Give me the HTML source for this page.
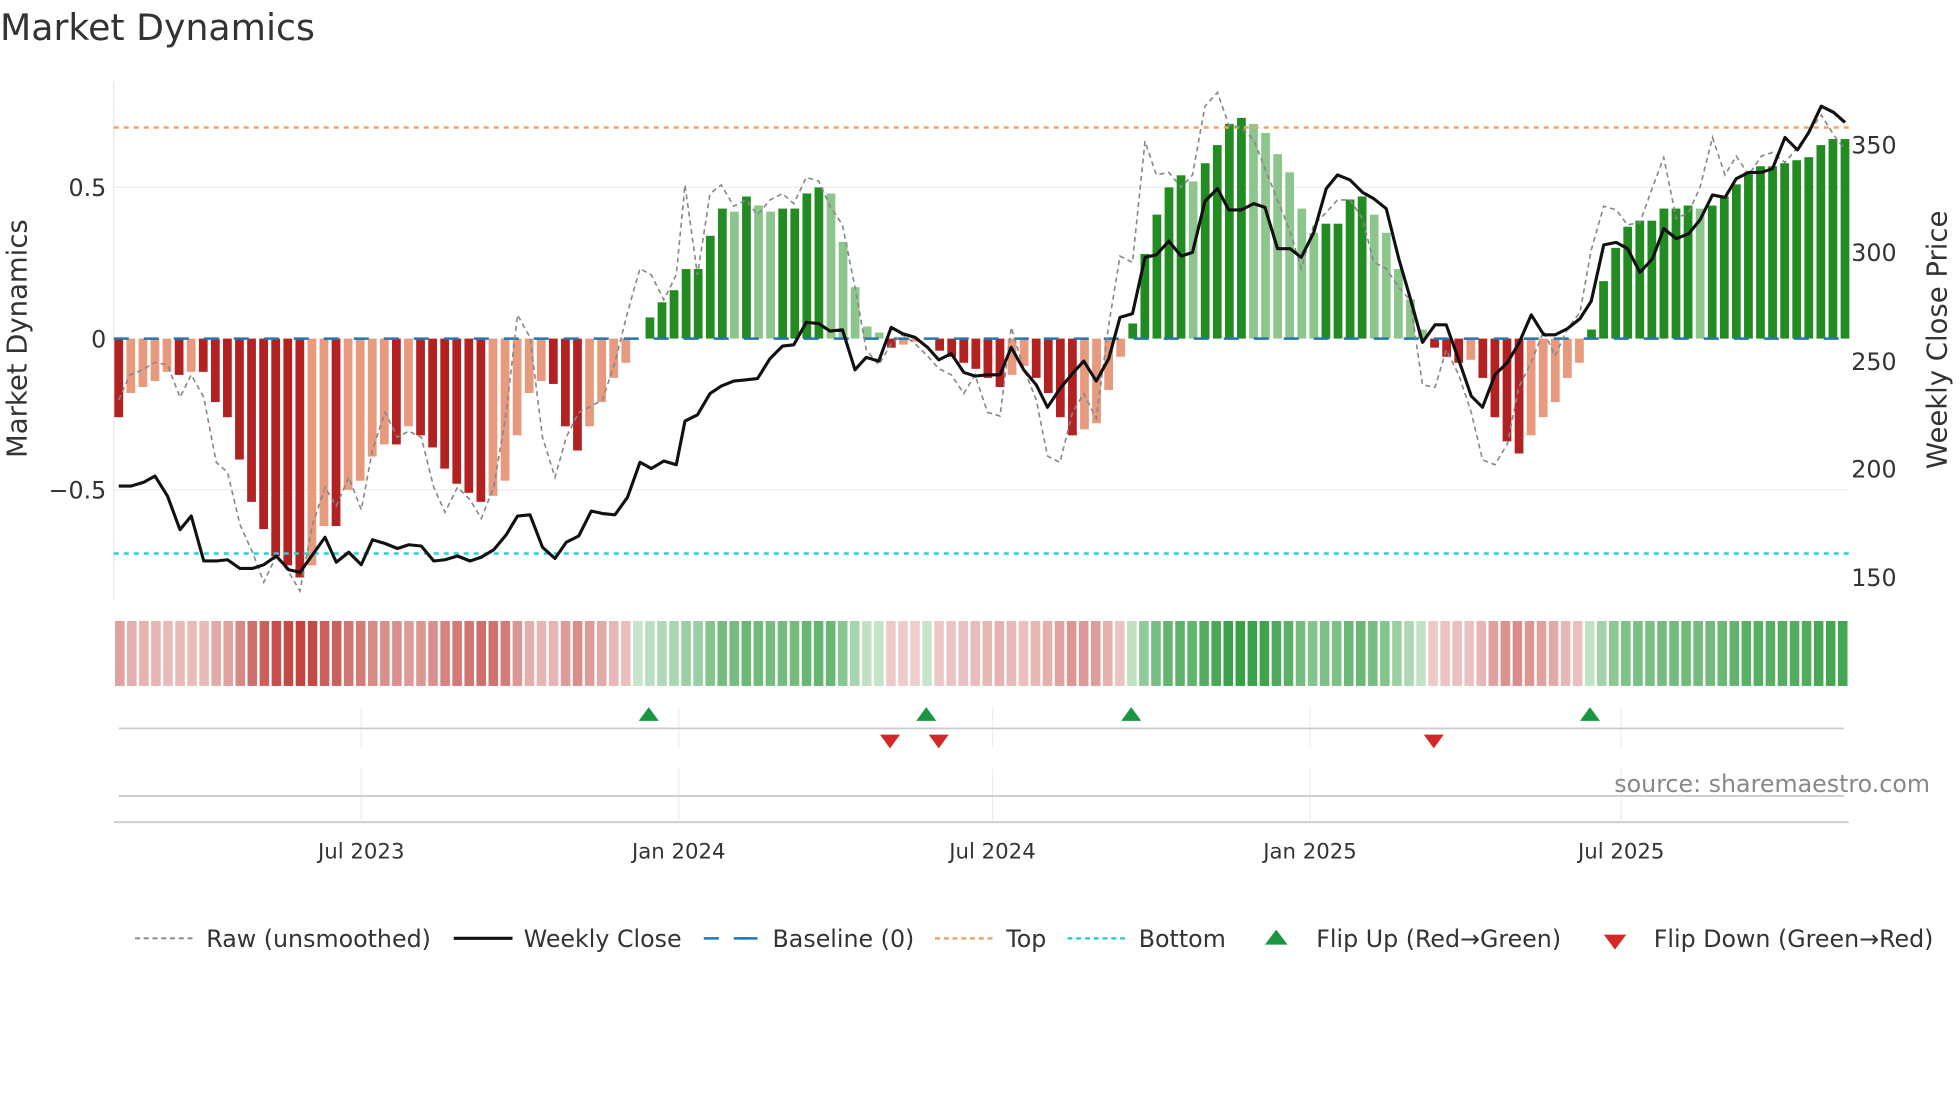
<!DOCTYPE html>
<html><head><meta charset="utf-8"><style>
html,body{margin:0;padding:0;background:#fff;}
svg{display:block;font-family:"DejaVu Sans","Liberation Sans",sans-serif;}
</style></head><body>
<svg id="s" width="1960" height="1102" viewBox="0 0 1568 882" preserveAspectRatio="none" xmlns="http://www.w3.org/2000/svg">
<text x="0" y="32" font-size="29" fill="#333">Market Dynamics</text>
<line x1="91" y1="65" x2="91" y2="480" stroke="#e6e6e6" stroke-width="1"/>
<line x1="91" y1="150" x2="1479" y2="150" stroke="#eee"/>
<line x1="91" y1="392" x2="1479" y2="392" stroke="#eee"/>
<g id="bars"></g>
<line x1="91" y1="271" x2="1479" y2="271" stroke="#1f77b4" stroke-width="2" stroke-dasharray="12,12"/>
<line x1="91" y1="102" x2="1479" y2="102" stroke="#f4a460" stroke-width="2" stroke-dasharray="4,4"/>
<line x1="91" y1="443" x2="1479" y2="443" stroke="#2ad0d8" stroke-width="2" stroke-dasharray="4,4"/>
<polyline id="raw" fill="none" stroke="#888" stroke-width="1.3" stroke-dasharray="4,3"/>
<polyline id="close" fill="none" stroke="#111" stroke-width="2.5" stroke-linejoin="round"/>
<g font-size="19" fill="#333">
<text x="85" y="157" text-anchor="end">0.5</text>
<text x="85" y="278" text-anchor="end">0</text>
<text x="85" y="399" text-anchor="end">−0.5</text>
<text x="1481" y="123">350</text>
<text x="1481" y="209">300</text>
<text x="1481" y="296">250</text>
<text x="1481" y="382">200</text>
<text x="1481" y="469">150</text>
</g>
<text transform="translate(21,271) rotate(-90)" font-size="22" fill="#333" text-anchor="middle">Market Dynamics</text>
<text transform="translate(1557,272) rotate(-90)" font-size="22" fill="#333" text-anchor="middle">Weekly Close Price</text>
<g id="strip"></g>
<g stroke="#eee">
<line x1="289" y1="566" x2="289" y2="598"/><line x1="543" y1="566" x2="543" y2="598"/><line x1="794" y1="566" x2="794" y2="598"/><line x1="1048" y1="566" x2="1048" y2="598"/><line x1="1297" y1="566" x2="1297" y2="598"/>
<line x1="289" y1="615" x2="289" y2="658"/><line x1="543" y1="615" x2="543" y2="658"/><line x1="794" y1="615" x2="794" y2="658"/><line x1="1048" y1="615" x2="1048" y2="658"/><line x1="1297" y1="615" x2="1297" y2="658"/>
</g>
<line x1="95" y1="583" x2="1475" y2="583" stroke="#ccc" stroke-width="1.5"/>
<line x1="95" y1="637" x2="1475" y2="637" stroke="#ccc" stroke-width="1.5"/>
<line x1="91" y1="658" x2="1479" y2="658" stroke="#ccc" stroke-width="1.5"/>
<g fill="#1a9641">
<path d="M519,566 l-8,11 h16z"/><path d="M741,566 l-8,11 h16z"/><path d="M905,566 l-8,11 h16z"/><path d="M1272,566 l-8,11 h16z"/>
</g>
<g fill="#d62728">
<path d="M712,599 l-8,-11 h16z"/><path d="M751,599 l-8,-11 h16z"/><path d="M1147,599 l-8,-11 h16z"/>
</g>
<text x="1544" y="634" font-size="19" fill="#888" text-anchor="end">source: sharemaestro.com</text>
<g font-size="17" fill="#333" text-anchor="middle">
<text x="289" y="687">Jul 2023</text><text x="543" y="687">Jan 2024</text><text x="794" y="687">Jul 2024</text><text x="1048" y="687">Jan 2025</text><text x="1297" y="687">Jul 2025</text>
</g>
<g font-size="19" fill="#333">
<line x1="108" y1="751" x2="154" y2="751" stroke="#888" stroke-width="1.5" stroke-dasharray="4,3"/>
<text x="165" y="758">Raw (unsmoothed)</text>
<line x1="363" y1="751" x2="410" y2="751" stroke="#111" stroke-width="2.5"/>
<text x="419" y="758">Weekly Close</text>
<line x1="562" y1="751" x2="608" y2="751" stroke="#1f77b4" stroke-width="2" stroke-dasharray="12,12" stroke-dashoffset="-1"/>
<line x1="592" y1="751" x2="606" y2="751" stroke="#1f77b4" stroke-width="2"/>
<text x="618" y="758">Baseline (0)</text>
<line x1="748" y1="751" x2="794" y2="751" stroke="#f4a460" stroke-width="2" stroke-dasharray="4,3"/>
<text x="805" y="758">Top</text>
<line x1="854" y1="751" x2="900" y2="751" stroke="#2ad0d8" stroke-width="2" stroke-dasharray="4,3"/>
<text x="911" y="758">Bottom</text>
<path d="M1021,744 l-9,12 h18z" fill="#1a9641"/>
<text x="1053" y="758">Flip Up (Red→Green)</text>
<path d="M1292,760 l-9,-12 h18z" fill="#d62728"/>
<text x="1323" y="758">Flip Down (Green→Red)</text>
</g>
</svg>
<script>
var v=[-0.26,-0.18,-0.16,-0.14,-0.11,-0.12,-0.11,-0.11,-0.21,-0.26,-0.40,-0.54,-0.63,-0.72,-0.75,-0.79,-0.75,-0.62,-0.62,-0.50,-0.47,-0.39,-0.35,-0.35,-0.29,-0.32,-0.36,-0.43,-0.48,-0.51,-0.54,-0.52,-0.47,-0.32,-0.18,-0.14,-0.15,-0.29,-0.37,-0.29,-0.21,-0.13,-0.08,0,0.07,0.12,0.16,0.23,0.23,0.34,0.43,0.42,0.47,0.44,0.42,0.43,0.43,0.48,0.50,0.48,0.32,0.17,0.04,0.02,-0.03,-0.02,-0.01,0.0,-0.04,-0.06,-0.08,-0.10,-0.13,-0.16,-0.12,-0.09,-0.13,-0.18,-0.26,-0.32,-0.30,-0.28,-0.17,-0.06,0.05,0.28,0.41,0.50,0.54,0.52,0.58,0.64,0.71,0.73,0.71,0.68,0.61,0.55,0.43,0.35,0.38,0.38,0.46,0.47,0.41,0.35,0.23,0.13,0.03,-0.03,-0.06,-0.08,-0.07,-0.13,-0.26,-0.34,-0.38,-0.32,-0.26,-0.21,-0.13,-0.08,0.03,0.19,0.30,0.37,0.39,0.39,0.43,0.43,0.44,0.43,0.44,0.47,0.51,0.55,0.57,0.57,0.58,0.59,0.60,0.64,0.66,0.66];
var N=v.length,x0=95,x1=1476,st=(x1-x0)/(N-1),b='',s='';
var sx0=91,sw=(1479-91)/N;
for(var i=0;i<N;i++){var x=x0+i*st,val=v[i],prev=i?v[i-1]:val,h=Math.abs(val)*242,y=val>=0?271-h:271,c;
if(val>=0){c=(val>=prev)?'#228b22':'#8cc68c';}else{c=(val<=prev)?'#b22222':'#e89a7e';}
if(h>0)b+='<rect x="'+(x-3.5)+'" y="'+y+'" width="7" height="'+h+'" fill="'+c+'"/>';
var a=0.25+Math.min(Math.abs(val),0.8)*0.9;var col=val>=0?'rgba(34,150,50,'+a+')':'rgba(190,60,55,'+a+')';
s+='<rect x="'+(sx0+i*sw+1)+'" y="497" width="'+(sw-2)+'" height="52" fill="'+col+'"/>';}
document.getElementById('bars').innerHTML=b;document.getElementById('strip').innerHTML=s;
document.getElementById('close').setAttribute('points',"95,389 105,389 115,386 124,381 134,397 144,424 153,413 163,449 173,449 182,448 192,455 202,455 211,452 221,445 231,456 240,458 250,444 260,430 269,450 279,442 289,452 298,432 308,435 318,439 327,436 337,437 347,449 356,448 366,445 376,449 385,446 395,440 405,428 414,413 424,412 434,438 444,447 453,434 463,429 473,409 482,411 492,412 502,398 512,370 521,375 531,369 541,372 548,337 558,332 568,315 577,309 587,305 597,304 606,303 616,287 626,277 635,276 645,258 655,259 664,265 674,264 684,296 693,286 703,289 713,262 722,267 732,270 742,278 751,288 761,283 771,298 780,301 790,300 800,300 809,278 819,296 829,308 838,326 848,311 858,299 867,289 877,305 887,287 896,254 906,251 916,206 925,204 935,193 945,205 954,202 964,161 974,151 983,168 993,168 1003,163 1012,166 1022,199 1032,199 1041,206 1051,186 1061,151 1070,140 1080,144 1090,154 1099,159 1109,167 1119,207 1128,238 1138,274 1148,260 1157,260 1167,288 1177,317 1186,326 1196,300 1206,290 1215,275 1225,252 1235,268 1244,268 1254,263 1264,255 1273,241 1283,196 1293,194 1302,199 1312,218 1322,207 1331,183 1341,191 1351,187 1360,176 1370,156 1380,158 1389,143 1399,138 1409,138 1418,135 1428,110 1438,120 1447,106 1457,85 1467,90 1476,98");
document.getElementById('raw').setAttribute('points',"95,320 104,300 114,296 124,290 134,292 144,318 153,300 163,318 173,370 182,378 192,420 202,442 211,466 221,445 231,458 240,473 250,420 260,390 269,405 279,382 289,408 298,360 308,330 318,350 327,345 337,350 347,390 356,410 366,390 376,400 385,415 395,390 405,330 414,252 424,270 434,350 444,382 453,350 463,330 473,325 482,320 492,290 502,250 512,215 521,220 531,240 541,220 548,148 558,220 568,155 577,148 587,165 597,160 606,172 616,160 626,155 635,163 645,142 655,145 664,165 674,180 684,230 693,280 703,292 713,275 722,268 732,275 742,285 751,295 761,300 771,315 780,300 790,330 800,333 809,262 819,295 829,320 838,365 848,370 858,330 867,315 877,335 887,260 896,205 906,210 916,113 925,140 935,138 945,150 954,140 964,85 974,74 983,100 993,102 1003,112 1012,135 1022,160 1032,185 1041,215 1051,180 1061,170 1070,160 1080,160 1090,175 1099,210 1109,215 1119,230 1128,240 1138,308 1148,310 1157,280 1167,300 1177,330 1186,368 1196,372 1206,355 1215,310 1225,290 1235,265 1244,285 1254,263 1264,250 1273,200 1283,165 1293,168 1302,180 1312,178 1322,150 1331,126 1341,175 1351,170 1360,150 1370,110 1380,140 1389,125 1399,140 1409,125 1418,122 1428,130 1438,118 1447,106 1457,92 1467,108 1476,120");
</script>
</body></html>
